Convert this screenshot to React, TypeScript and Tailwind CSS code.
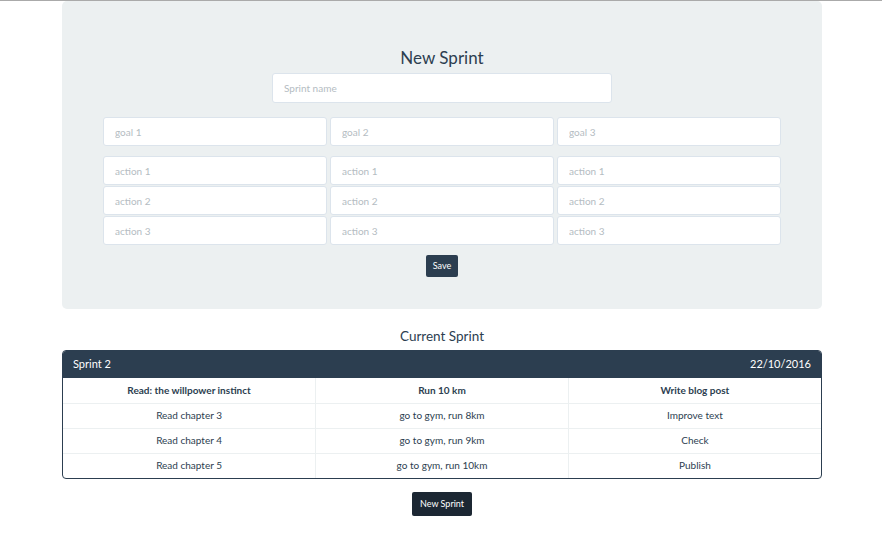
import React from 'react';

const goals = ['goal 1', 'goal 2', 'goal 3'];
const actions = ['action 1', 'action 2', 'action 3'];

const sprint = {
  name: 'Sprint 2',
  date: '22/10/2016',
  goals: [
    { title: 'Read: the willpower instinct', actions: ['Read chapter 3', 'Read chapter 4', 'Read chapter 5'] },
    { title: 'Run 10 km', actions: ['go to gym, run 8km', 'go to gym, run 9km', 'go to gym, run 10km'] },
    { title: 'Write blog post', actions: ['Improve text', 'Check', 'Publish'] },
  ],
};

const Field: React.FC<{ placeholder: string; className?: string }> = ({ placeholder, className = '' }) => (
  <input
    placeholder={placeholder}
    className={`w-full h-[29px] bg-white border border-[#dce4ec] rounded-[3px] px-[11px] text-[10px] text-[#2c3e50] placeholder:text-[#b4bcc2] outline-none ${className}`}
  />
);

export default function App() {
  return (
    <div className="min-h-screen bg-white border-t border-[#aaaaaa] font-['Lato','Noto_Sans',sans-serif] text-[#2c3e50]">
      <div className="w-[760px] ml-[62px]">
        {/* New sprint form */}
        <div className="bg-[#ecf0f1] rounded-[5px] h-[308px] pt-[45px] px-[41px]">
          <h1 className="text-center text-[17px] leading-[23px] mb-[4px]">New Sprint</h1>
          <div className="w-[340px] mx-auto">
            <Field placeholder="Sprint name" className="h-[30px]" />
          </div>
          <div className="grid grid-cols-3 gap-x-[3px] mt-[14px]">
            {goals.map((g) => (
              <Field key={g} placeholder={g} />
            ))}
          </div>
          <div className="grid grid-cols-3 gap-x-[3px] gap-y-[1px] mt-[10px]">
            {actions.map((a) =>
              goals.map((g) => <Field key={g + a} placeholder={a} />)
            )}
          </div>
          <div className="flex justify-center mt-[10px]">
            <button className="h-[22px] px-[7px] bg-[#2c3e50] text-white text-[9px] rounded-[2px]">Save</button>
          </div>
        </div>

        {/* Current sprint */}
        <h2 className="text-center text-[13.5px] leading-[20px] mt-[17px] mb-[4px]">Current Sprint</h2>
        <div className="border border-[#2c3e50] rounded-[4px] overflow-hidden">
          <div className="h-[27px] bg-[#2c3e50] text-white text-[11px] flex items-center justify-between px-[10px]">
            <span>{sprint.name}</span>
            <span>{sprint.date}</span>
          </div>
          <table className="w-full table-fixed text-[10px] text-center">
            <tbody>
              <tr className="h-[25px]">
                {sprint.goals.map((g) => (
                  <th key={g.title} className="font-bold border-r border-[#ecf0f1] last:border-r-0">{g.title}</th>
                ))}
              </tr>
              {[0, 1, 2].map((i) => (
                <tr key={i} className="h-[25px] border-t border-[#ecf0f1]">
                  {sprint.goals.map((g) => (
                    <td key={g.title} className="border-r border-[#ecf0f1] last:border-r-0">{g.actions[i]}</td>
                  ))}
                </tr>
              ))}
            </tbody>
          </table>
        </div>

        <div className="flex justify-center mt-[13px]">
          <button className="h-[24px] px-[8px] bg-[#1c2733] text-white text-[9px] rounded-[2px]">New Sprint</button>
        </div>
      </div>
    </div>
  );
}
